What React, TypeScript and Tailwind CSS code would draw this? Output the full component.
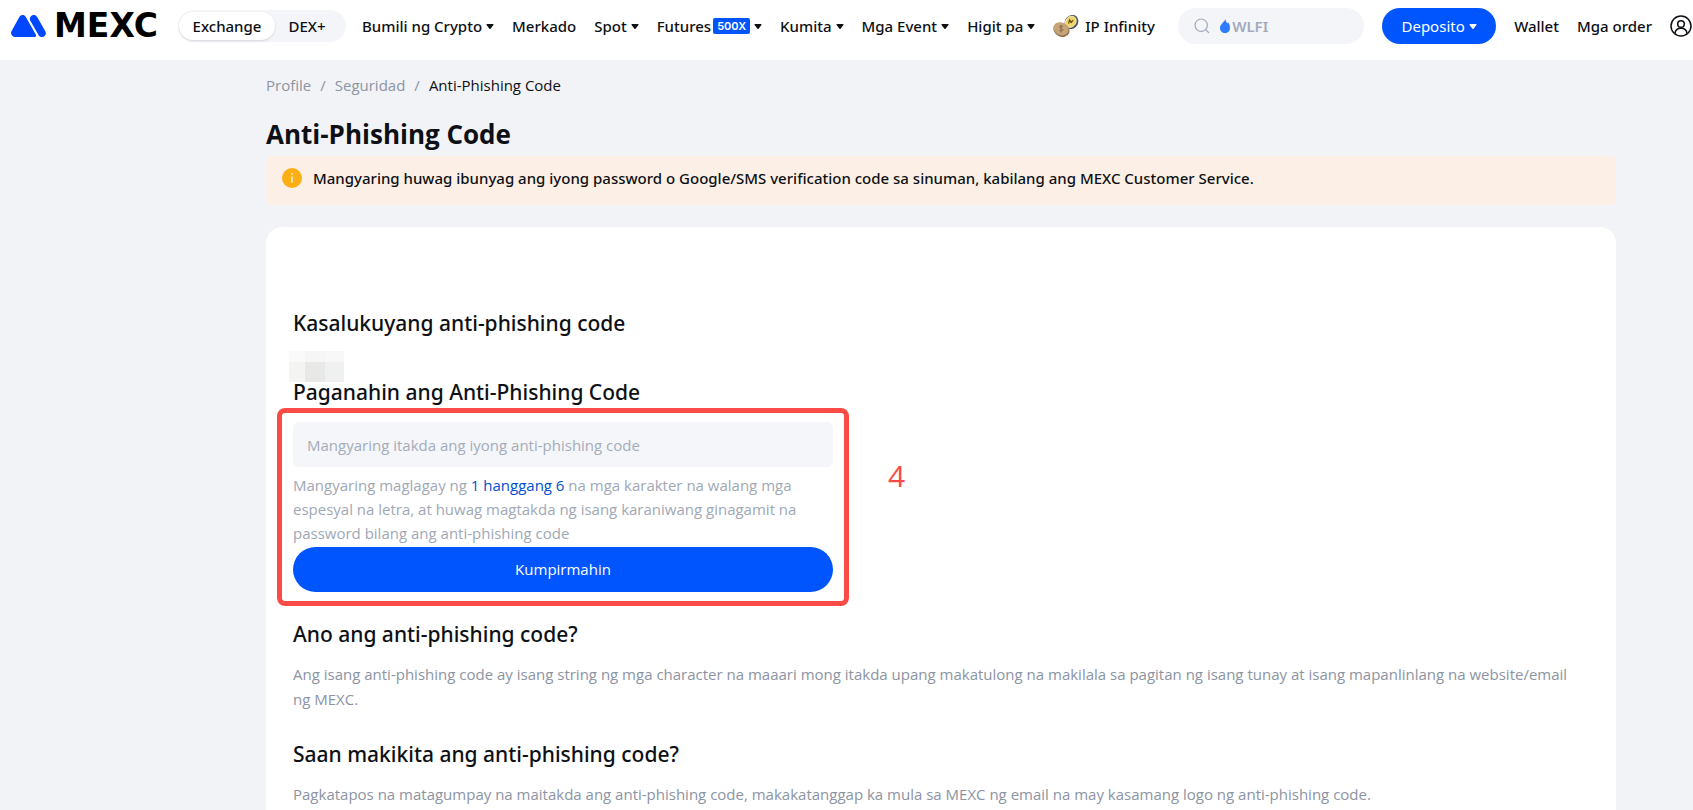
import { useState } from 'react'

const navItems = [
  { label: 'Bumili ng Crypto', caret: true },
  { label: 'Merkado' },
  { label: 'Spot', caret: true },
  { label: 'Futures', badge: '500X', caret: true },
  { label: 'Kumita', caret: true },
  { label: 'Mga Event', caret: true },
  { label: 'Higit pa', caret: true },
]

const medium = "font-['Noto_Sans','Open_Sans',sans-serif] font-medium"

const Caret = ({ className = '' }: { className?: string }) => (
  <svg viewBox="0 0 9 6" className={`w-2 h-[5px] shrink-0 ${className}`} fill="currentColor">
    <path d="M1 0h7c.8 0 1 .6.6 1.100L5.200 5.600c-.4.5-1 .5-1.400 0L.4 1.100C0 .6.2 0 1 0z" />
  </svg>
)

const Logo = () => (
  <a href="#" className="flex items-center gap-2 shrink-0 w-[151px] text-black">
    <svg viewBox="0 0 35 22" className="w-[35px] h-[22px] shrink-0" fill="#0047ff">
      <path d="M8.500 1.800C10 -.6 13.300 -.6 14.700 1.800L24.800 19.500C25.500 20.800 24.800 22 23.400 22H4.200C1 22 -1 18.800.6 16z" />
      <path d="M19.500 1.800C21 -.6 24.600 -.6 26 1.800L34.300 16.200C35.800 18.900 34.200 22 31 22C29.400 22 28.300 21.200 27.500 19.900L19.300 5.700C18.500 4.300 18.700 3 19.500 1.800z" />
    </svg>
    <span className="font-['DejaVu_Sans',sans-serif] font-bold text-[33px] leading-8">MEXC</span>
  </a>
)

const Coins = () => (
  <svg viewBox="0 0 26 22" className="w-[26px] h-[22px] shrink-0">
    <ellipse cx="18.500" cy="7" rx="7.500" ry="6.500" fill="#4b5560" transform="rotate(-50 18.500 7)" />
    <ellipse cx="17.800" cy="6.800" rx="6" ry="5" fill="#f0d568" stroke="#fff6c4" strokeWidth=".8" transform="rotate(-50 17.800 6.800)" />
    <path d="M15.500 8.500l1.200-3.500 1.500 2.500 2-2.500" fill="none" stroke="#5c4a16" strokeWidth="1.200" />
    <ellipse cx="8.500" cy="14.800" rx="8.300" ry="6.800" fill="#8e6c45" transform="rotate(25 8.500 14.800)" />
    <ellipse cx="8" cy="13.800" rx="7.800" ry="6.300" fill="#c6a379" transform="rotate(25 8 13.800)" />
    <path d="M10 11.500c-1.500-1-3.500-.5-3.300.8.2 1.300 3 .9 3.200 2.300.2 1.300-2 1.800-3.500.7M8 10v7.500" fill="none" stroke="#8a6a44" strokeWidth="1" />
  </svg>
)

function Header() {
  const [query, setQuery] = useState('WLFI')

  return (
    <header className={`flex items-center h-[60px] pl-[11px] pb-2 bg-white whitespace-nowrap ${medium}`}>
      <Logo />
      <div className="flex items-center shrink-0 ml-4 h-8 w-[168px] p-px rounded-full bg-[#f4f5f9]">
        <button className="w-24 h-7 rounded-full bg-white shadow-sm">Exchange</button>
        <button className="flex-1 h-7 pr-1.5">DEX+</button>
      </div>
      <nav className="flex items-center gap-[18px] ml-4">
        {navItems.map(item => (
          <a key={item.label} href="#" className="flex items-center">
            {item.label}
            {item.badge && (
              <span className="ml-0.5 px-1 h-4 rounded-xs bg-[#0055ff] text-white text-[11px] leading-4 font-semibold font-['Inter',sans-serif]">{item.badge}</span>
            )}
            {item.caret && <Caret className="ml-1" />}
          </a>
        ))}
        <a href="#" className="flex items-center gap-1.5"><Coins />IP Infinity</a>
      </nav>
      <div className="flex items-center ml-auto shrink-0">
        <label className="flex items-center w-[186px] h-9 px-4 rounded-full bg-[#f4f5f9] text-[#a3abbb]">
          <svg viewBox="0 0 16 16" className="w-4 h-4 mr-2.5 shrink-0" fill="none" stroke="currentColor" strokeWidth="1.200">
            <circle cx="7.200" cy="7.200" r="6.200" />
            <path d="M11.700 11.700L15 15" />
          </svg>
          <svg viewBox="0 0 10 14" className="w-[10px] h-[14px] mr-0.5 shrink-0">
            <path d="M5.200 0c.5 2.300 1.300 3.200 2 4.500l.9-1.300C9.400 5 10 7 10 9c0 3-2.200 5-5 5s-5-2-5-5c0-2.300 1.200-3.400 2.500-5C3.600 2.800 4.800 1.800 5.200 0z" fill="#2f7bff" />
          </svg>
          <input aria-label="Search" value={query} onChange={e => setQuery(e.target.value)} className="w-full min-w-0 bg-transparent outline-none font-semibold" />
        </label>
        <button className="flex items-center justify-center gap-1 w-[114px] h-9 ml-[18px] rounded-full bg-[#0055ff] text-white font-normal">
          Deposito<Caret />
        </button>
        <a href="#" className="ml-[18px]">Wallet</a>
        <a href="#" className="ml-[18px]">Mga order</a>
        <button aria-label="Account" className="ml-[18px] mr-px">
          <svg viewBox="0 0 22 22" className="w-[22px] h-[22px]" fill="none" stroke="currentColor" strokeWidth="1.500">
            <circle cx="11" cy="11" r="10" />
            <circle cx="11" cy="9" r="3.300" />
            <path d="M5 18.500c.3-3.300 2.800-5.200 6-5.200s5.700 1.900 6 5.200" />
          </svg>
        </button>
      </div>
    </header>
  )
}

function CodeForm() {
  const [code, setCode] = useState('')

  return (
    <form className="relative w-[540px] mt-3.5" onSubmit={e => e.preventDefault()}>
      <input
        id="code"
        value={code}
        onChange={e => setCode(e.target.value)}
        placeholder="Mangyaring itakda ang iyong anti-phishing code"
        className="block w-full h-[45px] px-3.5 rounded-md bg-[#f4f6fa] outline-none placeholder:text-[#a5acb9]"
      />
      <p className="mt-1.5 pb-0.5 leading-6 text-[#a0a8b5]">
        Mangyaring maglagay ng <span className="text-[#0050d0]">1 hanggang 6</span> na mga karakter na walang mga espesyal na letra, at huwag magtakda ng isang karaniwang ginagamit na password bilang ang anti-phishing code
      </p>
      <button className="block w-full h-[45px] rounded-full bg-[#0055ff] text-white">Kumpirmahin</button>

      {/* Step marker */}
      <div className="absolute -inset-x-4 -inset-y-3.5 rounded-lg border-5 border-[#fb4b46] pointer-events-none" />
      <span className="absolute left-[595px] top-9 text-[30px] leading-9 text-[#fb4b46]">4</span>
    </form>
  )
}

// Censored code value
const Mosaic = () => (
  <div className="grid grid-cols-[16px_20px_19px] grid-rows-[11px_20px] w-[55px] -ml-1 mt-3 -mb-1.5">
    <div className="bg-[#fafafa]" />
    <div className="bg-[#f6f6f6]" />
    <div className="bg-[#f8f8f8]" />
    <div className="bg-[#f4f4f3]" />
    <div className="bg-[#e8e8e6]" />
    <div className="bg-[#eff0f0]" />
  </div>
)

const heading = `text-[21px] leading-8 ${medium}`

export default function App() {
  return (
    <div className="flex flex-col h-screen overflow-hidden bg-[#f2f3f7] font-['Open_Sans','Noto_Sans',sans-serif] text-[15px] leading-[25px] text-[#0d1014]">
      <Header />
      <main className="flex flex-col flex-1 min-h-0 ml-[266px] mr-[77px]">
        <nav className="flex gap-[9px] pt-[13px] text-[#8c94a3]">
          <a href="#">Profile</a>
          <span>/</span>
          <a href="#">Seguridad</a>
          <span>/</span>
          <span className="text-[#0d1014]">Anti-Phishing Code</span>
        </nav>
        <h1 className="mt-[18px] text-[26px] leading-9 font-bold">Anti-Phishing Code</h1>

        <div className="flex gap-[11px] mt-1 h-[49px] shrink-0 px-4 pt-2.5 rounded-md bg-[#fcf0e6]">
          <svg viewBox="0 0 20 20" className="w-5 h-5 mt-0.5 shrink-0">
            <circle cx="10" cy="10" r="10" fill="#fcae14" />
            <path d="M10 8.500v6M10 5.300v1.500" stroke="#fff" strokeWidth="1.300" />
          </svg>
          <p className={medium}>Mangyaring huwag ibunyag ang iyong password o Google/SMS verification code sa sinuman, kabilang ang MEXC Customer Service.</p>
        </div>

        <section className="flex-1 mt-[22px] pt-20 pl-[27px] pr-10 rounded-t-2xl bg-white">
          <h2 className={heading}>Kasalukuyang anti-phishing code</h2>
          <Mosaic />
          <h2 className={heading}><label htmlFor="code">Paganahin ang Anti-Phishing Code</label></h2>
          <CodeForm />

          <h2 className={`mt-[26px] ${heading}`}>Ano ang anti-phishing code?</h2>
          <p className="mt-3 text-[#8c94a3]">Ang isang anti-phishing code ay isang string ng mga character na maaari mong itakda upang makatulong na makilala sa pagitan ng isang tunay at isang mapanlinlang na website/email ng MEXC.</p>
          <h2 className={`mt-[26px] ${heading}`}>Saan makikita ang anti-phishing code?</h2>
          <p className="mt-3 text-[#8c94a3]">Pagkatapos na matagumpay na maitakda ang anti-phishing code, makakatanggap ka mula sa MEXC ng email na may kasamang logo ng anti-phishing code.</p>
        </section>
      </main>
    </div>
  )
}
